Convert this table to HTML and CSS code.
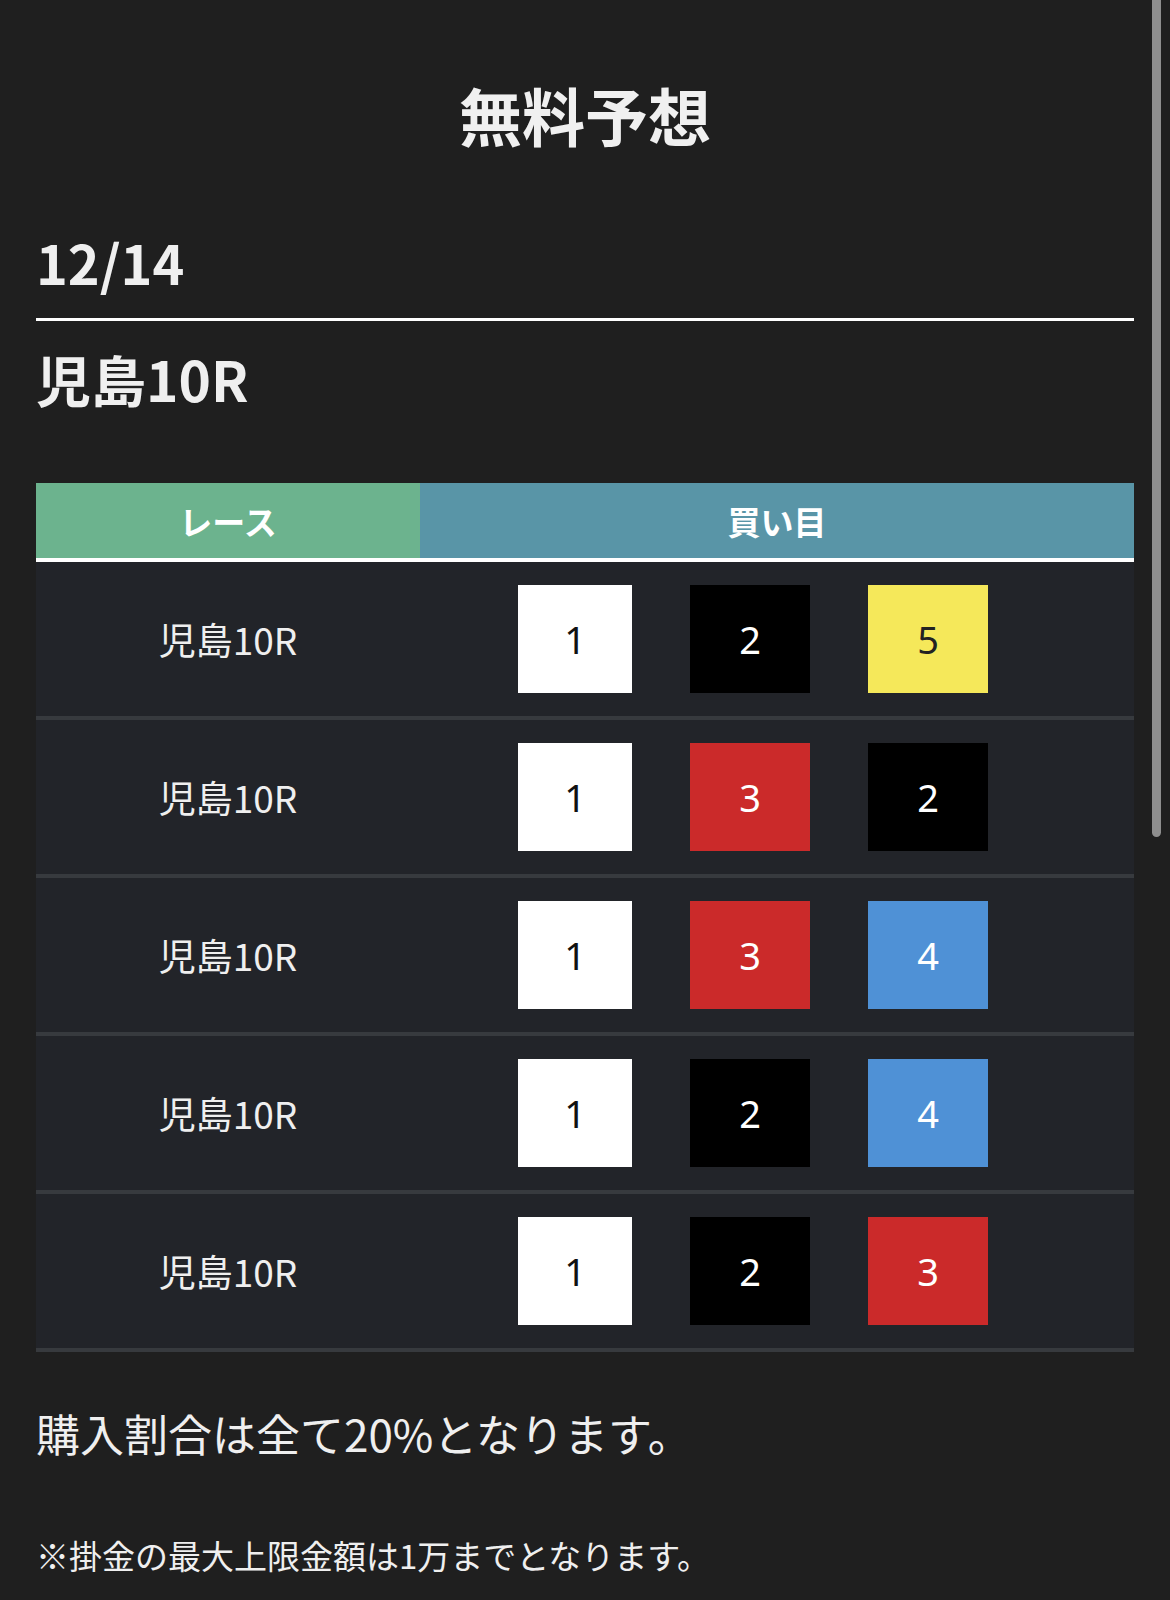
FILE: index.html
```html
<!DOCTYPE html>
<html lang="ja">
<head>
<meta charset="utf-8">
<title>無料予想</title>
<link rel="stylesheet" href="styles.css">
</head>
<body>
<main class="page">
  <h1 class="title">無料予想</h1>
  <div class="date">12/14</div>
  <h2 class="venue">児島10R</h2>

  <div class="table">
    <div class="thead">
      <div class="th th-race">レース</div>
      <div class="th th-bet">買い目</div>
    </div>
    <div class="row">
      <div class="race">児島10R</div>
      <div class="bets"><span class="box b-white">1</span><span class="box b-black">2</span><span class="box b-yellow">5</span></div>
    </div>
    <div class="row">
      <div class="race">児島10R</div>
      <div class="bets"><span class="box b-white">1</span><span class="box b-red">3</span><span class="box b-black">2</span></div>
    </div>
    <div class="row">
      <div class="race">児島10R</div>
      <div class="bets"><span class="box b-white">1</span><span class="box b-red">3</span><span class="box b-blue">4</span></div>
    </div>
    <div class="row">
      <div class="race">児島10R</div>
      <div class="bets"><span class="box b-white">1</span><span class="box b-black">2</span><span class="box b-blue">4</span></div>
    </div>
    <div class="row">
      <div class="race">児島10R</div>
      <div class="bets"><span class="box b-white">1</span><span class="box b-black">2</span><span class="box b-red">3</span></div>
    </div>
  </div>

  <p class="note">購入割合は全て20%となります。</p>
  <p class="small">※掛金の最大上限金額は1万までとなります。</p>
</main>
<div class="scrollbar"></div>
</body>
</html>
```

FILE: styles.css
```css
html, body {
  margin: 0;
  padding: 0;
  background: #1f1f1f;
}
body {
  font-family: "Noto Sans CJK JP", "Noto Sans", sans-serif;
  color: #efefef;
  height: 1600px;
  overflow: hidden;
}
.page {
  padding: 0 36px;
}
.title {
  margin: 74px 0 0;
  font-size: 63px;
  line-height: 80px;
  font-weight: 700;
  text-align: center;
  color: #f0f0f0;
}
.date {
  margin-top: 68px;
  font-size: 54px;
  line-height: 80px;
  font-weight: 700;
  padding-bottom: 16px;
  border-bottom: 3px solid #ffffff;
}
.venue {
  margin: 17px 0 0;
  font-size: 55px;
  line-height: 80px;
  font-weight: 700;
}
.table {
  margin-top: 65px;
}
.thead {
  display: grid;
  grid-template-columns: 384px 1fr;
  height: 75px;
  border-bottom: 4px solid #ffffff;
}
.th {
  display: flex;
  align-items: center;
  justify-content: center;
  font-size: 33px;
  font-weight: 700;
  color: #ffffff;
}
.th-race { background: #6cb38e; }
.th-bet { background: #5995a7; }
.row {
  display: grid;
  grid-template-columns: 384px 1fr;
  height: 154px;
  background: #222429;
  border-bottom: 4px solid #373a3e;
}
.race {
  display: flex;
  align-items: center;
  justify-content: center;
  font-size: 37px;
  color: #efefef;
}
.bets {
  display: flex;
  align-items: center;
  gap: 58px;
  padding-left: 98px;
}
.box {
  display: flex;
  align-items: center;
  justify-content: center;
  width: 120px;
  height: 108px;
  font-size: 38px;
  font-family: "Noto Sans", "Noto Sans CJK JP", sans-serif;
}
.box:first-child { width: 114px; }
.b-white { background: #ffffff; color: #111111; }
.b-black { background: #000000; color: #ffffff; }
.b-red { background: #cb2a2a; color: #ffffff; }
.b-blue { background: #4f91d6; color: #ffffff; }
.b-yellow { background: #f5e85a; color: #222222; }
.note {
  margin: 51px 0 0;
  font-size: 44px;
  line-height: 60px;
}
.small {
  margin: 68px 0 0;
  font-size: 33px;
  line-height: 48px;
}
.scrollbar {
  position: fixed;
  top: 0;
  left: 1152px;
  width: 9px;
  height: 837px;
  background: #8e8e8e;
  border-radius: 0 0 5px 5px;
}
```
